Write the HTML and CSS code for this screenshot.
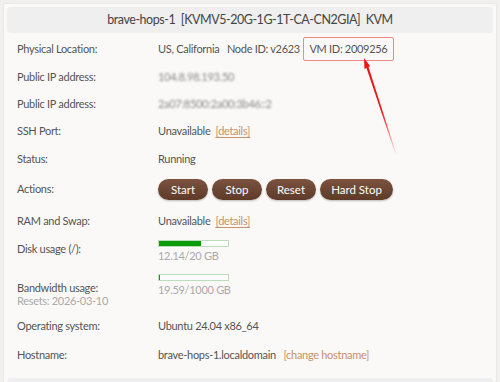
FILE: index.html
```html
<!DOCTYPE html>
<html lang="en">
<head>
    <meta charset="UTF-8">
    <title>brave-hops-1 - KVM</title>
    <link rel="stylesheet" href="styles.css">
</head>
<body>
    <div class="panel">
        <div class="vm-title">brave-hops-1&nbsp;&nbsp;[KVMV5-20G-1G-1T-CA-CN2GIA]&nbsp;&nbsp;KVM</div>

        <div class="row r-loc">
            <span class="label">Physical Location:</span>
            <span class="value">US, California&nbsp;&nbsp; Node ID: v2623 <span class="vm-id">VM ID: 2009256</span></span>
        </div>
        <div class="row r-ip">
            <span class="label">Public IP address:</span>
            <span class="value"><span class="blurred">104.8.98.193.50</span></span>
        </div>
        <div class="row r-ip2">
            <span class="label">Public IP address:</span>
            <span class="value"><span class="blurred">2a07:8500:2a00:3b46::2</span></span>
        </div>
        <div class="row r-ssh">
            <span class="label">SSH Port:</span>
            <span class="value">Unavailable&nbsp; <a class="link" href="#">[details]</a></span>
        </div>
        <div class="row r-status">
            <span class="label">Status:</span>
            <span class="value">Running</span>
        </div>
        <div class="row r-actions">
            <span class="label">Actions:</span>
            <span class="value buttons">
                <button class="btn">Start</button>
                <button class="btn">Stop</button>
                <button class="btn">Reset</button>
                <button class="btn wide">Hard Stop</button>
            </span>
        </div>
        <div class="row r-ram">
            <span class="label">RAM and Swap:</span>
            <span class="value">Unavailable&nbsp; <a class="link" href="#">[details]</a></span>
        </div>
        <div class="row r-disk">
            <span class="label">Disk usage (/):</span>
            <span class="value">
                <span class="bar"><span class="fill" style="width: 60.7%"></span></span>
                <span class="usage">12.14/20 GB</span>
            </span>
        </div>
        <div class="row r-bw">
            <span class="label">Bandwidth usage:<span class="sub">Resets: 2026-03-10</span></span>
            <span class="value">
                <span class="bar"><span class="fill" style="width: 2%"></span></span>
                <span class="usage">19.59/1000 GB</span>
            </span>
        </div>
        <div class="row r-os">
            <span class="label">Operating system:</span>
            <span class="value">Ubuntu 24.04 x86_64</span>
        </div>
        <div class="row r-host">
            <span class="label">Hostname:</span>
            <span class="value">brave-hops-1.localdomain&nbsp;&nbsp; <a class="link" href="#">[change hostname]</a></span>
        </div>

        <div class="vm-title next"></div>

        <svg class="arrow" width="60" height="110" viewBox="0 0 60 110">
            <defs>
                <linearGradient id="fade" x1="0" y1="0" x2="0" y2="1">
                    <stop offset="0" stop-color="#f01010"/>
                    <stop offset="0.55" stop-color="#f01818"/>
                    <stop offset="1" stop-color="#f01818" stop-opacity="0"/>
                </linearGradient>
            </defs>
            <polygon points="13,2 19,10 17.5,11 46,100 45,100 15.5,12 13.5,13" fill="url(#fade)"/>
        </svg>
    </div>
</body>
</html>
```

FILE: styles.css
```css
* {
    margin: 0;
    padding: 0;
    box-sizing: border-box;
}

body {
    background: #f1f0ee;
    font-family: Lato, "Liberation Sans", sans-serif;
    font-size: 11px;
    letter-spacing: -0.3px;
    color: #555;
    padding: 3px 3px 0 3px;
}

.panel {
    position: relative;
    background: #faf9f7;
    border: 1px solid #ebe9e6;
    border-bottom: none;
    padding: 3px 3px 0 3px;
    height: 379px;
    overflow: hidden;
}

.vm-title {
    background: #efefef;
    border-radius: 4px;
    height: 26px;
    line-height: 26px;
    text-align: center;
    font-size: 12.5px;
    letter-spacing: -0.45px;
    color: #444;
}

.vm-title.next {
    margin-top: 9px;
}

.row {
    display: grid;
    grid-template-columns: 141px 1fr;
    align-items: center;
    padding-left: 10px;
    height: 28px;
    line-height: 14px;
}

.r-loc { height: 29px; margin-top: 1px; }
.r-ip { height: 27px; }
.r-ip2 { height: 27px; }
.r-actions { height: 32px; }
.r-ram { height: 32px; }

.r-disk,
.r-bw {
    align-items: start;
}

.r-disk { height: 34px; padding-top: 3px; }
.r-disk .label { padding-top: 2px; }

.r-bw { height: 40px; padding-top: 3px; }
.r-bw .label { padding-top: 7px; }

.r-os { height: 29px; }
.r-host { height: 29px; }

.value {
    color: #555;
}

.vm-id {
    display: inline-block;
    border: 1px solid #f08a8a;
    border-radius: 2px;
    padding: 4px 6px 4px 5px;
    margin-left: 1px;
}

.blurred {
    color: #888;
    filter: blur(1.2px);
}

.link {
    color: #c9906a;
    text-decoration: none;
}

.r-ssh .link,
.r-ram .link {
    text-decoration: underline;
    text-underline-offset: 2px;
}

.buttons {
    display: flex;
    gap: 4px;
}

.btn {
    font-family: inherit;
    font-size: 11.5px;
    letter-spacing: 0;
    color: #fff;
    border: none;
    height: 21px;
    width: 50px;
    border-radius: 11px;
    background: linear-gradient(#7b5340, #5e3a28);
    box-shadow: 0 1px 2px rgba(0, 0, 0, 0.25);
    cursor: pointer;
}

.btn.wide {
    width: 73px;
}

.bar {
    display: block;
    width: 71px;
    height: 7px;
    border: 1px solid #bcdcbc;
    background: #fff;
}

.fill {
    display: block;
    height: 100%;
    background: #0a9a0a;
}

.usage {
    display: block;
    color: #aaa;
    margin-top: 2px;
}

.sub {
    display: block;
    color: #aaa;
    margin-top: -1px;
}

.arrow {
    position: absolute;
    left: 347px;
    top: 52px;
}
```
